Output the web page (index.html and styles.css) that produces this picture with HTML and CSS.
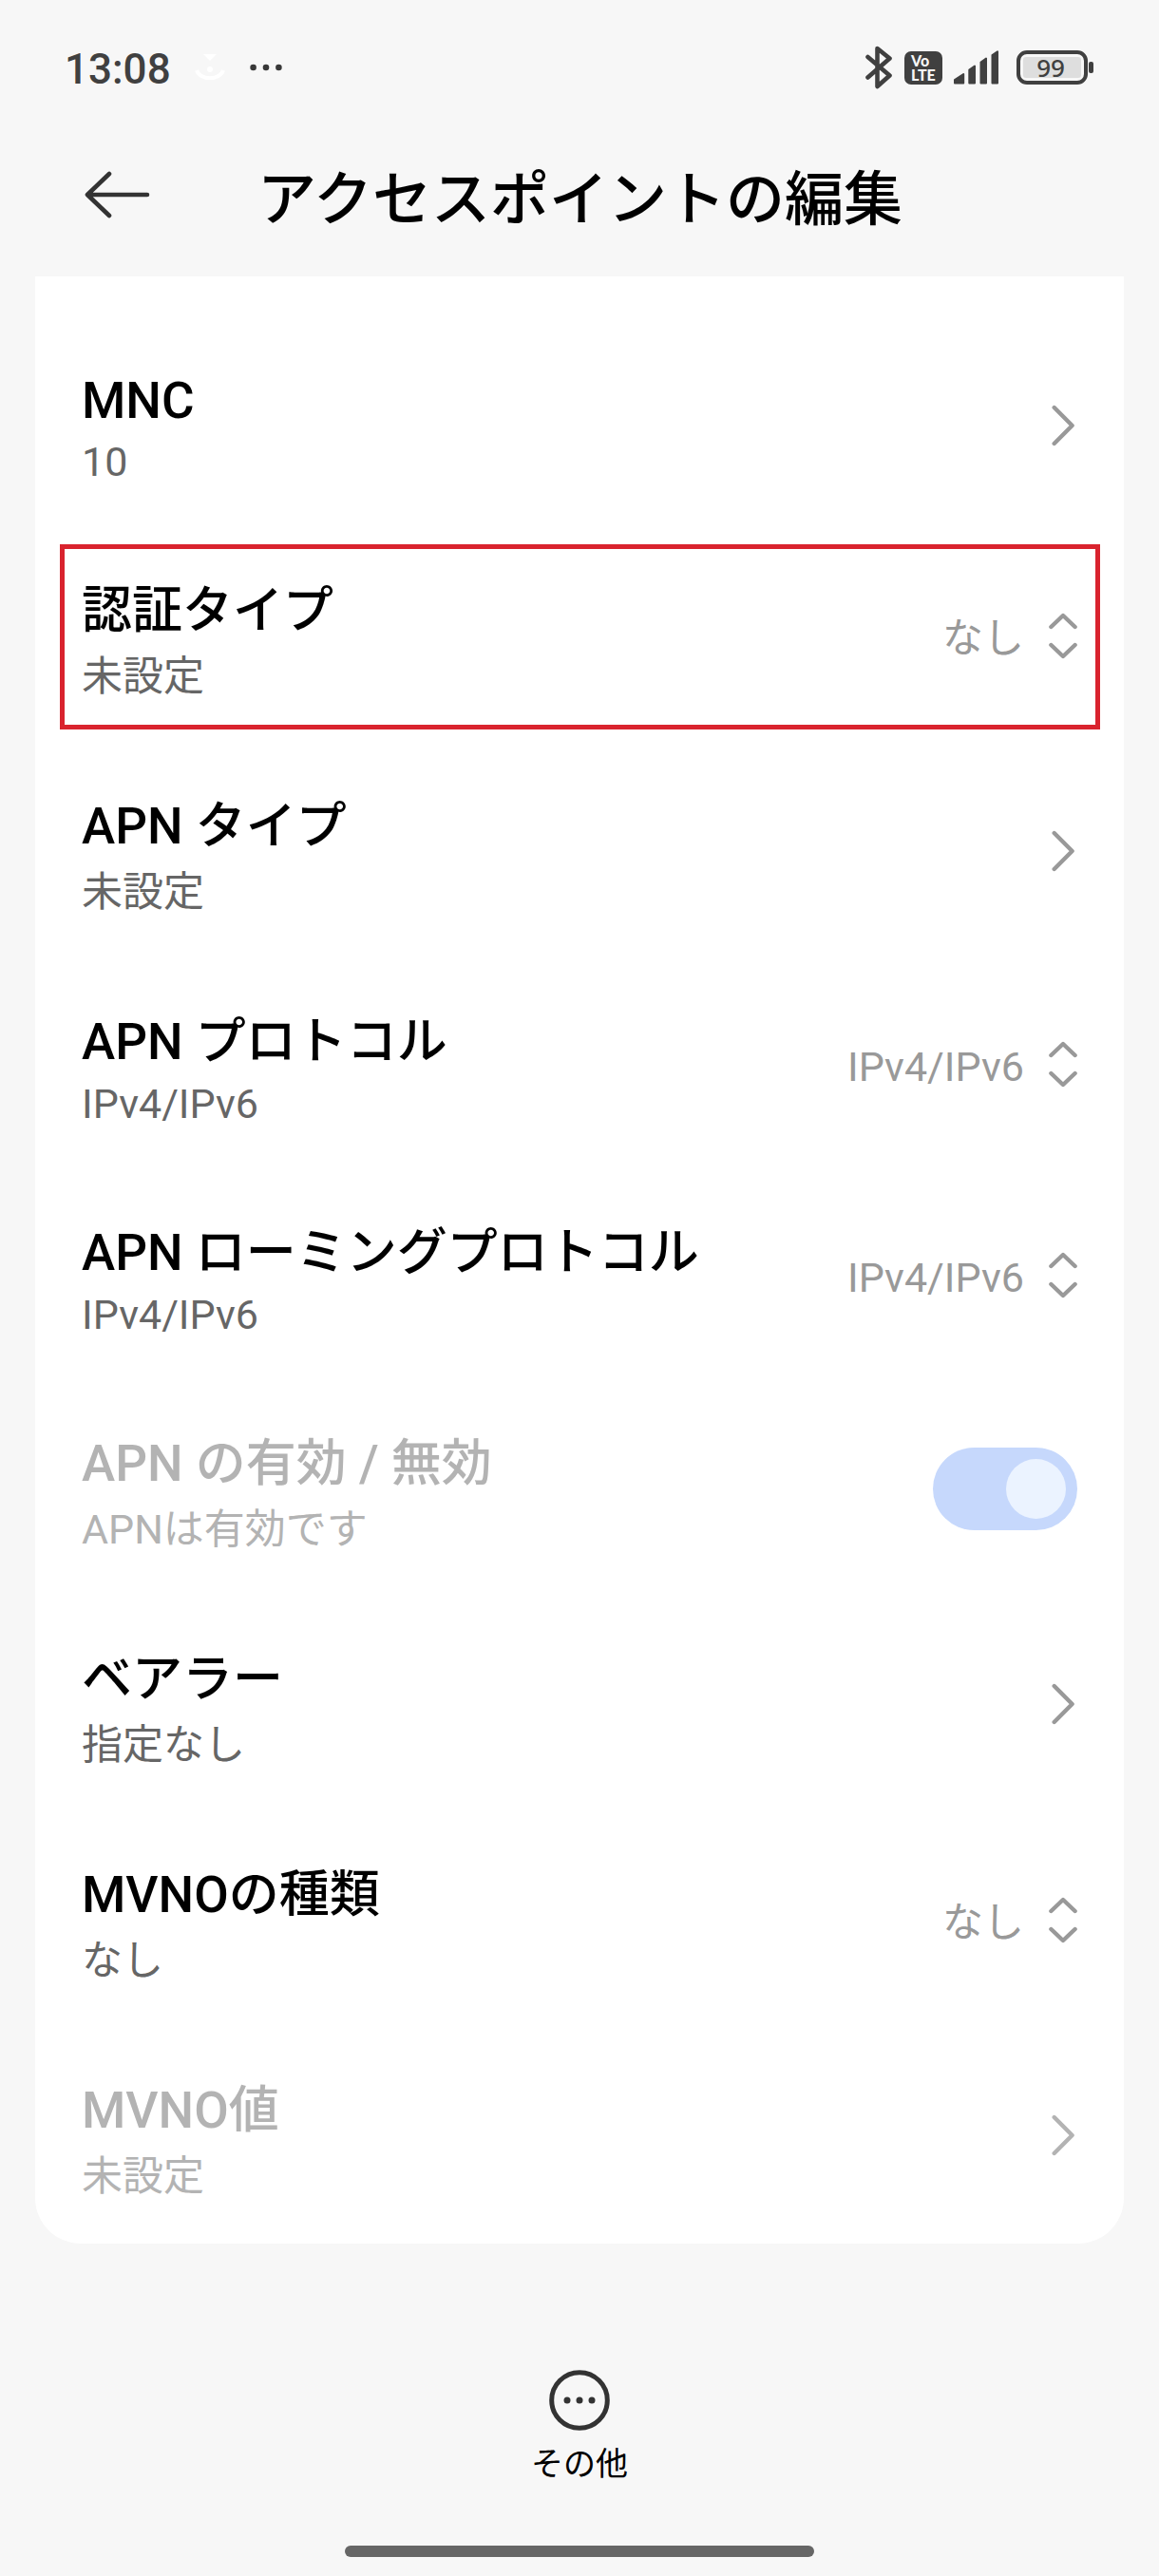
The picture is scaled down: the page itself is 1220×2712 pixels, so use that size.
FILE: index.html
```html
<!DOCTYPE html>
<html lang="ja">
  <head>
    <meta charset="UTF-8" />
    <meta name="viewport" content="width=device-width, initial-scale=1.0" />
    <title>アクセスポイントの編集</title>
    <link rel="stylesheet" href="styles.css">
  </head>
  <body>
    <!-- Shared icons -->
    <svg class="icon-defs" width="0" height="0">
      <symbol id="icon-next" viewBox="0 0 30 44">
        <path d="M5.7 3L24.6 22L5.7 41" />
      </symbol>
      <symbol id="icon-sort" viewBox="0 0 30 49">
        <path d="M2.4 15L15 3L27.6 15M2.4 34L15 46L27.6 34" />
      </symbol>
    </svg>

    <!-- Status Bar -->
    <div class="status-bar">
      <span class="clock">13:08</span>
      <svg class="notify-icon" width="32" height="30" viewBox="0 0 32 30">
        <path d="M9 1H23L16 8Z" fill="#ffffff" />
        <circle cx="16" cy="17" r="3" fill="#ffffff" />
        <path d="M2 18C6 29 26 29 30 18" fill="none" stroke="#ffffff" stroke-width="4" />
      </svg>
      <svg class="more-icon" width="34" height="8" viewBox="0 0 34 8" fill="#383838">
        <circle cx="3.6" cy="4" r="3.3" />
        <circle cx="17" cy="4" r="3.3" />
        <circle cx="30.4" cy="4" r="3.3" />
      </svg>
      <div class="status-right">
        <svg width="28" height="46" viewBox="0 0 28 46" fill="none" stroke="#404040" stroke-width="4.6" stroke-linecap="round" stroke-linejoin="round">
          <path d="M2.5 12L25.5 31.5L12.5 43V3L25.5 13.5L2.5 33.5" />
        </svg>
        <div class="volte">
          <span>Vo</span>
          <span>LTE</span>
        </div>
        <svg class="signal" width="47" height="36" viewBox="0 0 47 36" fill="#404040" stroke="#404040" stroke-width="2" stroke-linejoin="round">
          <path d="M1 34.5V31L10.2 25V34.5ZM16.3 34.5V20.5L22 16.5V34.5ZM28.5 34.5V12.5L34 8.5V34.5ZM40.5 34.5V5L46 1.2V34.5Z" />
        </svg>
        <div class="battery">
          <div class="battery-level">99</div>
        </div>
        <div class="battery-tip"></div>
      </div>
    </div>

    <!-- Header -->
    <div class="header">
      <svg class="back" width="70" height="52" viewBox="0 0 70 52">
        <path d="M66 26H3M26 4L3 26L26 48" />
      </svg>
      <h1>アクセスポイントの編集</h1>
    </div>

    <!-- Settings List -->
    <div class="settings">
      <div class="row">
        <div class="label">
          <div class="title latin">MNC</div>
          <div class="summary latin">10</div>
        </div>
        <svg class="next"><use href="#icon-next" /></svg>
      </div>
      <div class="row highlighted">
        <div class="label">
          <div class="title">認証タイプ</div>
          <div class="summary">未設定</div>
        </div>
        <span class="value">なし</span>
        <svg class="sort"><use href="#icon-sort" /></svg>
      </div>
      <div class="row">
        <div class="label">
          <div class="title">APN タイプ</div>
          <div class="summary">未設定</div>
        </div>
        <svg class="next"><use href="#icon-next" /></svg>
      </div>
      <div class="row">
        <div class="label">
          <div class="title">APN プロトコル</div>
          <div class="summary latin">IPv4/IPv6</div>
        </div>
        <span class="value">IPv4/IPv6</span>
        <svg class="sort"><use href="#icon-sort" /></svg>
      </div>
      <div class="row">
        <div class="label">
          <div class="title">APN ローミングプロトコル</div>
          <div class="summary latin">IPv4/IPv6</div>
        </div>
        <span class="value">IPv4/IPv6</span>
        <svg class="sort"><use href="#icon-sort" /></svg>
      </div>
      <div class="row disabled">
        <div class="label">
          <div class="title">APN の有効 / 無効</div>
          <div class="summary">APNは有効です</div>
        </div>
        <div class="toggle"><div class="knob"></div></div>
      </div>
      <div class="row">
        <div class="label">
          <div class="title">ベアラー</div>
          <div class="summary">指定なし</div>
        </div>
        <svg class="next"><use href="#icon-next" /></svg>
      </div>
      <div class="row">
        <div class="label">
          <div class="title">MVNOの種類</div>
          <div class="summary">なし</div>
        </div>
        <span class="value">なし</span>
        <svg class="sort"><use href="#icon-sort" /></svg>
      </div>
      <div class="row disabled">
        <div class="label">
          <div class="title">MVNO値</div>
          <div class="summary">未設定</div>
        </div>
        <svg class="next"><use href="#icon-next" /></svg>
      </div>
    </div>

    <!-- Bottom Menu -->
    <div class="bottom-menu">
      <svg width="64" height="64" viewBox="0 0 64 64" fill="#333333">
        <circle cx="32" cy="32" r="29.3" fill="none" stroke="#333333" stroke-width="5" />
        <circle cx="19" cy="32" r="3.5" />
        <circle cx="32" cy="32" r="3.5" />
        <circle cx="45" cy="32" r="3.5" />
      </svg>
      <span>その他</span>
    </div>
    <div class="home-bar"></div>
  </body>
</html>
```
FILE: styles.css
```css
/* Global Styles */
* {
  box-sizing: border-box;
}

body {
  margin: 0;
  height: 2712px;
  display: flex;
  flex-direction: column;
  font-family: Roboto, "Noto Sans CJK JP", sans-serif;
  background-color: #f7f7f7;
  color: #000000;
}

svg {
  display: block;
  flex: none;
}

.icon-defs {
  position: absolute;
}

/* Status Bar */
.status-bar {
  display: flex;
  align-items: center;
  height: 142px;
  padding: 0 69px 0 68px;
}

.clock {
  width: 137px;
  font-size: 44px;
  font-weight: 500;
  line-height: 52px;
  color: #404040;
  margin-top: 3px;
}

.more-icon {
  margin-left: 26px;
}

.status-right {
  display: flex;
  align-items: center;
  margin-left: auto;
}

.volte {
  display: flex;
  flex-direction: column;
  justify-content: center;
  width: 40px;
  height: 35px;
  margin: 0 12px 0 13px;
  padding-left: 7px;
  border-radius: 7px;
  background-color: #404040;
  color: #f7f7f7;
  font-family: Lato, sans-serif;
  font-size: 16px;
  font-weight: 900;
  line-height: 15px;
}

.battery {
  width: 75px;
  height: 36px;
  margin-left: 19px;
  padding: 3px;
  border: 4px solid #404040;
  border-radius: 11px;
}

.battery-level {
  height: 22px;
  border-radius: 3px;
  background-color: #dedede;
  color: #404040;
  font-family: "Noto Sans", sans-serif;
  font-size: 26px;
  font-weight: 500;
  line-height: 23px;
  padding-right: 3px;
  text-align: center;
}

.battery-tip {
  width: 5px;
  height: 12px;
  margin-left: 1px;
  border-radius: 2px;
  background-color: #404040;
}

/* Header */
.header {
  display: flex;
  align-items: center;
  height: 149px;
  padding: 0 88px 23px 89px;
}

.back {
  fill: none;
  stroke: #333333;
  stroke-width: 4.6;
  stroke-linecap: round;
  stroke-linejoin: round;
}

.header h1 {
  flex: 1;
  margin: 11px 70px 0 0;
  font-size: 62px;
  font-weight: 500;
  line-height: 72px;
  text-align: center;
}

/* Settings List */
.settings {
  margin: 0 37px;
  padding-top: 49.5px;
  border-radius: 0 0 48px 48px;
  background-color: #ffffff;
}

.row {
  display: flex;
  align-items: center;
  padding: 0 49px;
  position: relative;
}

.label {
  flex: 1;
  padding: 50.5px 0 44.5px;
}

.title {
  padding: 6px 0 1px;
  font-size: 53px;
  font-weight: 500;
  line-height: 62px;
}

.summary {
  margin-top: 8px;
  padding: 4px 0 1px;
  font-size: 43px;
  line-height: 50px;
  color: #666666;
}

.title.latin,
.summary.latin {
  padding: 0;
}

.value {
  margin: 5px 26px 0 0;
  font-size: 43px;
  line-height: 50px;
  color: #999999;
}

.next,
.sort {
  width: 30px;
  height: 44px;
  fill: none;
  stroke: #999999;
  stroke-width: 4.4;
  stroke-linecap: round;
  stroke-linejoin: round;
}

.sort {
  height: 49px;
}

/* Red frame around the row to change */
.highlighted::after {
  content: "";
  position: absolute;
  top: 17px;
  right: 25px;
  bottom: 15px;
  left: 26px;
  border: 5px solid #d9232e;
}

.disabled .title,
.disabled .summary {
  color: #b3b3b3;
}

.disabled .next {
  stroke: #b3b3b3;
}

.toggle {
  display: flex;
  justify-content: flex-end;
  width: 152px;
  height: 87px;
  padding: 12px;
  border-radius: 44px;
  background-color: #c6d8fc;
}

.knob {
  width: 63px;
  height: 63px;
  border-radius: 50%;
  background-color: #ebf3ff;
}

/* Bottom Menu */
.bottom-menu {
  display: flex;
  flex-direction: column;
  align-items: center;
  gap: 15px;
  margin-top: 133px;
  font-size: 34px;
  line-height: 40px;
}

.home-bar {
  width: 494px;
  height: 12px;
  margin: auto auto 20px;
  border-radius: 6px;
  background-color: #666666;
}
```
